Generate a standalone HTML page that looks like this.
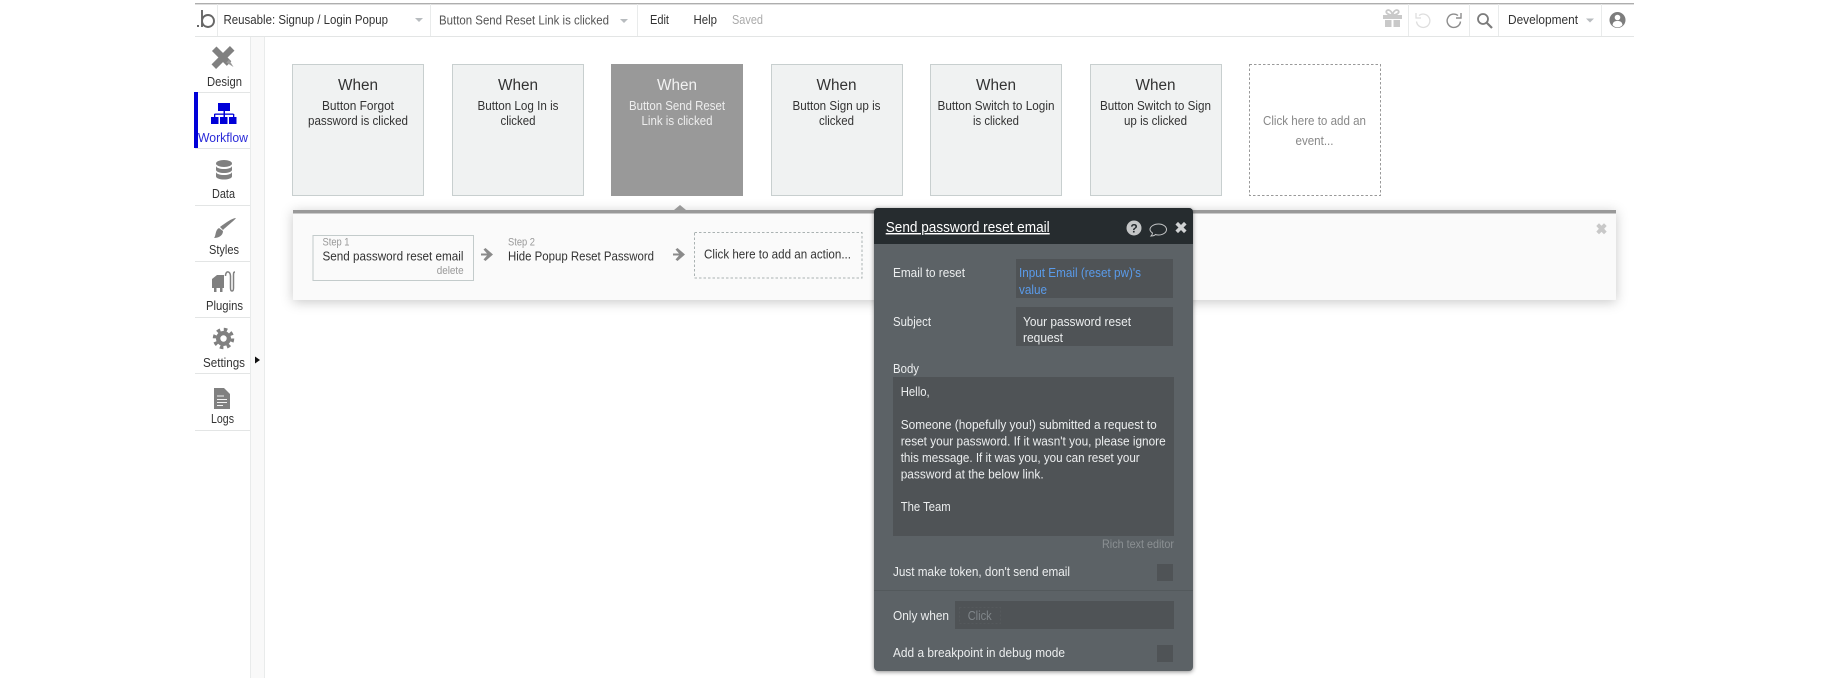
<!DOCTYPE html>
<html lang="en"><head><meta charset="utf-8"><title>Workflow editor</title>
<style>
html,body{margin:0;padding:0;background:#fff;width:1830px;height:690px;overflow:hidden}
svg{display:block;filter:blur(.35px)}
text{font-family:"Liberation Sans",sans-serif;font-size:13px;fill:#333}
.m{text-anchor:middle}
.e{text-anchor:end}
.w{font-size:15.500px;fill:#333}
.p{fill:#eceeef}
</style></head><body>
<svg width="1830" height="690" viewBox="0 0 1830 690" xmlns="http://www.w3.org/2000/svg">
<defs>
<filter id="s1" x="-5%" y="-30%" width="110%" height="170%"><feDropShadow dx="0" dy="2" stdDeviation="6" flood-color="#000" flood-opacity=".22"/></filter>
<filter id="s2" x="-10%" y="-5%" width="120%" height="110%"><feDropShadow dx="0" dy="1" stdDeviation="2" flood-color="#000" flood-opacity=".45"/></filter>
</defs>
<rect width="1830" height="690" fill="#fff"/>

<!-- top bar -->
<rect x="195" y="3" width="1439" height="1.400" fill="#aeaeae"/>
<rect x="195" y="36" width="1439" height="1" fill="#e3e5e5"/>
<g fill="#e9ebeb">
<rect x="217" y="4" width="1" height="32"/><rect x="430" y="4" width="1" height="32"/><rect x="637" y="4" width="1" height="32"/>
<rect x="1408" y="4" width="1" height="32"/><rect x="1469" y="4" width="1" height="32"/><rect x="1498" y="4" width="1" height="32"/><rect x="1601" y="4" width="1" height="32"/>
</g>
<rect x="197" y="25" width="2" height="2" fill="#666"/>
<path d="M202 10V27M202 21a6 6 0 1 0 12 0a6 6 0 1 0-12 0" fill="none" stroke="#666" stroke-width="1.900"/>
<text x="223.500" y="24" textLength="164.500" lengthAdjust="spacingAndGlyphs">Reusable: Signup / Login Popup</text>
<path d="M415 18h8l-4 4z" fill="#b8bcbf"/>
<text x="439" y="24.500" textLength="170" lengthAdjust="spacingAndGlyphs" style="fill:#555">Button Send Reset Link is clicked</text>
<path d="M620 19h8l-4 4z" fill="#b8bcbf"/>
<text x="650" y="24" textLength="19" lengthAdjust="spacingAndGlyphs">Edit</text>
<text x="693.500" y="24" textLength="23.500" lengthAdjust="spacingAndGlyphs">Help</text>
<text x="732" y="24" textLength="31" lengthAdjust="spacingAndGlyphs" style="fill:#aaa">Saved</text>
<!-- gift -->
<g fill="#c9c9c9">
<rect x="1383" y="15" width="19" height="4"/><rect x="1385" y="20" width="6.500" height="7"/><rect x="1393.500" y="20" width="6.500" height="7"/>
<path d="M1392.500 15c-4 0-7-2-6-4s5-1 6 4zM1392.500 15c4 0 7-2 6-4s-5-1-6 4z" fill="none" stroke="#c9c9c9" stroke-width="1.800"/>
</g>
<path d="M1419 15.500a6.700 6.700 0 1 1-2.500 6" fill="none" stroke="#dedede" stroke-width="1.300"/><path d="M1416 13v5h5" fill="none" stroke="#dedede" stroke-width="1.300"/>
<path d="M1458 15.500a6.700 6.700 0 1 0 2.500 6" fill="none" stroke="#8d8d8d" stroke-width="1.400"/><path d="M1461 13v5h-5" fill="none" stroke="#8d8d8d" stroke-width="1.400"/>
<circle cx="1483" cy="19" r="5" fill="none" stroke="#7c7c7c" stroke-width="1.800"/><path d="M1487 23l5 5" stroke="#7c7c7c" stroke-width="2.200"/>
<text x="1508" y="24" textLength="70" lengthAdjust="spacingAndGlyphs">Development</text>
<path d="M1586 18.500h8l-4 4z" fill="#b8bcbf"/>
<circle cx="1617.500" cy="20" r="8" fill="#7d7d7d"/><circle cx="1617.500" cy="17.500" r="2.800" fill="#fff"/><path d="M1612.500 25c.500-3.500 2.500-4 5-4s4.500.500 5 4a6.500 6.500 0 0 1-10 0z" fill="#fff"/>

<!-- sidebar -->
<rect x="250" y="37" width="14" height="641" fill="#f9f9f9"/>
<rect x="250" y="37" width="1" height="641" fill="#e9ebeb"/>
<rect x="264" y="37" width="1" height="641" fill="#e9ebeb"/>
<g fill="#e3e5e5">
<rect x="195" y="92" width="55" height="1"/><rect x="195" y="148" width="55" height="1"/><rect x="195" y="205" width="55" height="1"/><rect x="195" y="261" width="55" height="1"/><rect x="195" y="317" width="55" height="1"/><rect x="195" y="373" width="55" height="1"/><rect x="195" y="430" width="55" height="1"/>
</g>
<rect x="194" y="92" width="4" height="56" fill="#0000d8"/>
<path d="M255 356.500l5 3.500-5 3.500z" fill="#111"/>

<!-- design icon -->
<g fill="#808080">
<rect x="-13" y="-3.200" width="26" height="6.400" transform="translate(223 57.500) rotate(-45)"/>
<rect x="-11" y="-3.200" width="21" height="6.400" transform="translate(222 56.500) rotate(45)"/>
<path d="M229 59.800l4.500 7.200-7.200-4.500z" fill="#999"/>
</g>
<text class="m" x="224.500" y="86" textLength="35" lengthAdjust="spacingAndGlyphs">Design</text>
<!-- workflow icon -->
<g fill="#0000d8">
<rect x="218" y="103" width="12" height="8"/><rect x="223.500" y="111" width="1.500" height="6"/><rect x="214.500" y="113.500" width="19" height="1.300"/><rect x="214" y="114" width="1.300" height="3"/><rect x="233" y="114" width="1.300" height="3"/>
<rect x="211" y="117" width="7.500" height="7"/><rect x="220" y="117" width="7.500" height="7"/><rect x="229" y="117" width="7.500" height="7"/>
</g>
<text class="m" x="223" y="142" textLength="50" lengthAdjust="spacingAndGlyphs" style="fill:#2a2ad8">Workflow</text>
<!-- data icon -->
<g fill="#808080">
<ellipse cx="224" cy="163.500" rx="8" ry="3.500"/>
<path d="M216 166c1 4 15 4 16 0v4c-1 4-15 4-16 0z"/>
<path d="M216 172c1 4 15 4 16 0v4.500c-1 4-15 4-16 0z"/>
</g>
<text class="m" x="223.500" y="198" textLength="23" lengthAdjust="spacingAndGlyphs">Data</text>
<!-- styles icon -->
<path d="M236 218c-1 2-9 8-13 12l-3-3c4-3 12-9 16-9z" fill="#808080"/>
<path d="M219 228l4 3c0 5-5 7-9 7 2-2 1-8 5-10z" fill="#808080"/>
<text class="m" x="224" y="254" textLength="30" lengthAdjust="spacingAndGlyphs">Styles</text>
<!-- plugins icon -->
<g fill="#808080">
<path d="M212 279l5-4h7v13h-12z"/><rect x="214" y="288" width="2.500" height="4"/><rect x="220" y="288" width="2.500" height="4"/>
</g>
<path d="M225.500 276c0-6 5-5 5 0v12c0 4 3 4 3 0v-12c0-3 0-4 1.500-4" fill="none" stroke="#808080" stroke-width="1.500"/>
<text class="m" x="224.500" y="310" textLength="37" lengthAdjust="spacingAndGlyphs">Plugins</text>
<!-- settings icon -->
<circle cx="223.500" cy="338.500" r="7.500" fill="#808080"/>
<circle cx="223.500" cy="338.500" r="9" fill="none" stroke="#808080" stroke-width="3.500" stroke-dasharray="3.500 3.570"/>
<circle cx="223.500" cy="338.500" r="3.200" fill="#fff"/>
<text class="m" x="224" y="367" textLength="42" lengthAdjust="spacingAndGlyphs">Settings</text>
<!-- logs icon -->
<path d="M214 388h10l6 6v15h-16z" fill="#808080"/>
<path d="M217 396h7M217 399.500h10M217 402.500h10M217 405.500h6" stroke="#f2f2f2" stroke-width="1"/>
<text class="m" x="222.500" y="423" textLength="23" lengthAdjust="spacingAndGlyphs">Logs</text>

<!-- event cards -->
<g fill="#f0f2f2" stroke="#c8cfcf" stroke-width="1">
<rect x="292.500" y="64.500" width="131" height="131"/>
<rect x="452.500" y="64.500" width="131" height="131"/>
<rect x="771.500" y="64.500" width="131" height="131"/>
<rect x="930.500" y="64.500" width="131" height="131"/>
<rect x="1090.500" y="64.500" width="131" height="131"/>
</g>
<rect x="611" y="64" width="132" height="132" fill="#999"/>
<rect x="1249.500" y="64.500" width="131" height="131" fill="#fff" stroke="#999" stroke-dasharray="2.500 2"/>

<text class="m w" x="358" y="90" textLength="40" lengthAdjust="spacingAndGlyphs">When</text>
<text class="m" x="358" y="110" textLength="72" lengthAdjust="spacingAndGlyphs">Button Forgot</text>
<text class="m" x="358" y="125" textLength="100" lengthAdjust="spacingAndGlyphs">password is clicked</text>

<text class="m w" x="518" y="90" textLength="40" lengthAdjust="spacingAndGlyphs">When</text>
<text class="m" x="518" y="110" textLength="81" lengthAdjust="spacingAndGlyphs">Button Log In is</text>
<text class="m" x="518" y="125" textLength="35" lengthAdjust="spacingAndGlyphs">clicked</text>

<text class="m w" x="677" y="90" textLength="40" lengthAdjust="spacingAndGlyphs" style="fill:#f2f2f2">When</text>
<text class="m" x="677" y="110" textLength="96" lengthAdjust="spacingAndGlyphs" style="fill:#eee">Button Send Reset</text>
<text class="m" x="677" y="125" textLength="71" lengthAdjust="spacingAndGlyphs" style="fill:#eee">Link is clicked</text>

<text class="m w" x="836.500" y="90" textLength="40" lengthAdjust="spacingAndGlyphs">When</text>
<text class="m" x="836.500" y="110" textLength="88" lengthAdjust="spacingAndGlyphs">Button Sign up is</text>
<text class="m" x="836.500" y="125" textLength="35" lengthAdjust="spacingAndGlyphs">clicked</text>

<text class="m w" x="996" y="90" textLength="40" lengthAdjust="spacingAndGlyphs">When</text>
<text class="m" x="996" y="110" textLength="117" lengthAdjust="spacingAndGlyphs">Button Switch to Login</text>
<text class="m" x="996" y="125" textLength="46" lengthAdjust="spacingAndGlyphs">is clicked</text>

<text class="m w" x="1155.500" y="90" textLength="40" lengthAdjust="spacingAndGlyphs">When</text>
<text class="m" x="1155.500" y="110" textLength="111" lengthAdjust="spacingAndGlyphs">Button Switch to Sign</text>
<text class="m" x="1155.500" y="125" textLength="63" lengthAdjust="spacingAndGlyphs">up is clicked</text>

<text class="m" x="1314.500" y="125" textLength="103" lengthAdjust="spacingAndGlyphs" style="fill:#888">Click here to add an</text>
<text class="m" x="1314.500" y="145" textLength="38" lengthAdjust="spacingAndGlyphs" style="fill:#888">event...</text>

<!-- action panel -->
<rect x="293" y="210" width="1323" height="90" rx="1" fill="#fafafa" filter="url(#s1)"/>
<rect x="293" y="210" width="1323" height="3.500" fill="#999"/>
<path d="M674 210l6-5 6 5z" fill="#999"/>
<path d="M1597 226l2-2 2.500 2.500 2.500-2.500 2 2-2.500 2.800 2.500 2.800-2 2-2.500-2.500-2.500 2.500-2-2 2.500-2.800z" fill="#c8c8c8" stroke="#c8c8c8" stroke-width="1"/>
<rect x="313" y="235.500" width="160.500" height="45" fill="#fafafa" stroke="#c3cbcb"/>
<text x="322.500" y="245.500" textLength="27" lengthAdjust="spacingAndGlyphs" style="font-size:11px;fill:#999">Step 1</text>
<text x="322.500" y="260.500" textLength="141" lengthAdjust="spacingAndGlyphs">Send password reset email</text>
<text class="e" x="463.700" y="274" textLength="27" lengthAdjust="spacingAndGlyphs" style="font-size:11px;fill:#999">delete</text>
<path d="M481 253.500h6l-3.500-4 2-1.500 7.500 6.500-7.500 6.500-2-1.500 3.500-4h-6z" fill="#8a8a8a"/>
<text x="508" y="245.500" textLength="27" lengthAdjust="spacingAndGlyphs" style="font-size:11px;fill:#999">Step 2</text>
<text x="508" y="260.500" textLength="146" lengthAdjust="spacingAndGlyphs">Hide Popup Reset Password</text>
<path d="M673 253.500h6l-3.500-4 2-1.500 7.500 6.500-7.500 6.500-2-1.500 3.500-4h-6z" fill="#8a8a8a"/>
<rect x="694.500" y="232.500" width="167.500" height="45.500" fill="#fafafa" stroke="#aab2b2" stroke-dasharray="2.500 2"/>
<text x="704" y="258.500" textLength="147" lengthAdjust="spacingAndGlyphs">Click here to add an action...</text>

<!-- properties popup -->
<g filter="url(#s2)">
<rect x="874" y="208" width="319" height="463" rx="4" fill="#5c6266"/>
</g>
<path d="M874 244v-32a4 4 0 0 1 4-4h311a4 4 0 0 1 4 4v32z" fill="#262c2f"/>
<text x="885.700" y="232" textLength="164" lengthAdjust="spacingAndGlyphs" style="font-size:14.500px;fill:#fff;text-decoration:underline">Send password reset email</text>
<circle cx="1134" cy="228" r="7.500" fill="#c4c6c7"/>
<text class="m" x="1134" y="232.500" style="font-size:12px;font-weight:bold;fill:#262c2f">?</text>
<path d="M1158.500 224c4.500 0 8 2.500 8 5.500s-3.500 5.500-8 5.500c-1 0-2 0-3-.5-1 1-3 1.500-4.500 1.500 1-1 1.500-2 1.500-3-1.500-1-2.500-2-2.500-3.500 0-3 4-5.500 8.500-5.500z" fill="none" stroke="#c4c6c7" stroke-width="1"/>
<path d="M1176 224.500l2-2 3 3 3-3 2 2-3 3 3 3-2 2-3-3-3 3-2-2 3-3z" fill="#d0d2d3" stroke="#d0d2d3" stroke-width=".8"/>

<g fill="#4f5356">
<rect x="1016" y="259" width="157" height="39"/>
<rect x="1016" y="307" width="157" height="39"/>
<rect x="893" y="377" width="281" height="159"/>
<rect x="1157" y="564" width="16" height="17"/>
<rect x="955" y="601" width="219" height="28"/>
<rect x="1157" y="645" width="16" height="17"/>
</g>
<rect x="959.500" y="607.500" width="41" height="16" fill="none" stroke="#55595c" stroke-dasharray="2 2"/>
<rect x="874" y="590" width="319" height="1" fill="#53595c"/>

<text class="p" x="893" y="277" textLength="72" lengthAdjust="spacingAndGlyphs">Email to reset</text>
<text x="1019" y="277" textLength="122" lengthAdjust="spacingAndGlyphs" style="fill:#5a9bea">Input Email (reset pw)'s</text>
<text x="1019" y="294" textLength="28" lengthAdjust="spacingAndGlyphs" style="fill:#5a9bea">value</text>
<text class="p" x="893" y="326" textLength="38" lengthAdjust="spacingAndGlyphs">Subject</text>
<text class="p" x="1023" y="326" textLength="108" lengthAdjust="spacingAndGlyphs">Your password reset</text>
<text class="p" x="1023" y="342" textLength="40" lengthAdjust="spacingAndGlyphs">request</text>
<text class="p" x="893" y="373" textLength="26" lengthAdjust="spacingAndGlyphs">Body</text>
<text class="p" x="900.700" y="396" textLength="29" lengthAdjust="spacingAndGlyphs">Hello,</text>
<text class="p" x="900.700" y="429" textLength="256" lengthAdjust="spacingAndGlyphs">Someone (hopefully you!) submitted a request to</text>
<text class="p" x="900.700" y="445.500" textLength="265" lengthAdjust="spacingAndGlyphs">reset your password. If it wasn't you, please ignore</text>
<text class="p" x="900.700" y="462" textLength="239" lengthAdjust="spacingAndGlyphs">this message. If it was you, you can reset your</text>
<text class="p" x="900.700" y="478.500" textLength="143" lengthAdjust="spacingAndGlyphs">password at the below link.</text>
<text class="p" x="900.700" y="511" textLength="50" lengthAdjust="spacingAndGlyphs">The Team</text>
<text class="e" x="1174" y="548" textLength="72" lengthAdjust="spacingAndGlyphs" style="fill:#8b9093;font-size:12px">Rich text editor</text>
<text class="p" x="893" y="576" textLength="177" lengthAdjust="spacingAndGlyphs">Just make token, don't send email</text>
<text class="p" x="893" y="620" textLength="56" lengthAdjust="spacingAndGlyphs">Only when</text>
<text x="967.700" y="620" textLength="24" lengthAdjust="spacingAndGlyphs" style="fill:#80868a">Click</text>
<text class="p" x="893" y="657" textLength="172" lengthAdjust="spacingAndGlyphs">Add a breakpoint in debug mode</text>
</svg>
</body></html>
